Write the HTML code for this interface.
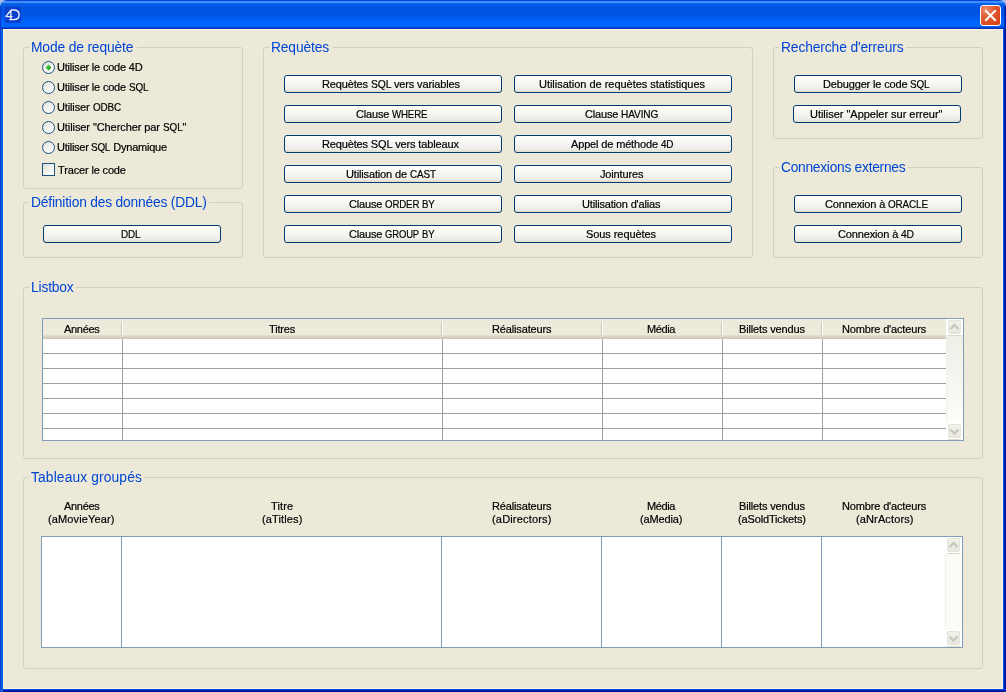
<!DOCTYPE html><html><head><meta charset="utf-8"><style>
*{margin:0;padding:0;box-sizing:border-box}
html,body{width:1006px;height:692px;overflow:hidden;background:#ECE9D8}
body{position:relative;font-family:"Liberation Sans",sans-serif;font-size:11px;color:#000;letter-spacing:-0.2px}
.a{position:absolute}
#tb{left:0;top:0;width:1006px;height:29px;border-radius:7px 7px 0 0;
background:linear-gradient(to bottom,#0842d6 0px,#0842d6 1px,#3d8ffb 1px,#3d8ffb 3px,#1069f0 3px,#0a5fe8 4px,#0058e4 6px,#0054e2 9px,#0054e2 14px,#0058ea 17px,#005ef5 19px,#0064fd 22px,#0066ff 26px,#0055e6 27px,#0036c8 28px,#0030c0 29px)}
#fl{left:0;top:29px;width:3px;height:663px;background:linear-gradient(to right,#0022c8,#166de8 50%,#0040e0)}
#fr{left:1003px;top:29px;width:3px;height:663px;background:linear-gradient(to right,#0a44ec 0,#0a44ec 1px,#0022b4 1px,#0022b4 2px,#00168a 2px)}
#fb{left:3px;top:689px;width:1003px;height:3px;background:linear-gradient(to bottom,#0a44ec 0,#0a44ec 1px,#0022b4 1px,#0022b4 2px,#00168a 2px)}
#cream{left:3px;top:29px;width:1000px;height:660px;border:1px solid #fcf5da;background:#ECE9D8}
.grp{position:absolute;border:1px solid #D0D0BF;border-radius:3px}
.gt{position:absolute;font-size:13.8px;color:#0046D5;line-height:15px;white-space:nowrap}
.btn{position:absolute;height:18px;border:1px solid #003C74;border-radius:3px;
background:linear-gradient(to bottom,#ffffff 0%,#f8f8f5 35%,#eeede8 80%,#e0dcd0 100%);
text-align:center;line-height:16px;white-space:nowrap;font-size:11px;color:#000}
.rad{position:absolute;width:13px;height:13px;border-radius:50%;border:1px solid #1c5180;
background:linear-gradient(135deg,#dcdcd7 0%,#f2f2f0 45%,#fff 100%)}
.lbl{position:absolute;white-space:nowrap;font-size:11px;line-height:13px;-webkit-text-stroke:0.2px #000}
.hdr{position:absolute;text-align:center;font-size:11px;line-height:13px;white-space:nowrap;-webkit-text-stroke:0.2px #000}
</style></head><body><div id="root" class="a" style="left:0;top:0;width:1006px;height:692px;will-change:transform">
<div class="a" style="left:0;top:0;width:8px;height:8px;background:#a6bde9"></div>
<div class="a" style="left:998px;top:0;width:8px;height:8px;background:#a6bde9"></div>
<div class="a" id="cream"></div>
<div class="a" id="tb"></div>
<div class="a" id="fl"></div><div class="a" id="fr"></div><div class="a" id="fb"></div>
<div class="a" style="left:0;top:6px;width:1px;height:23px;background:#0a3ad0"></div>
<div class="a" style="left:1004px;top:6px;width:2px;height:23px;background:linear-gradient(to right,#0038d8,#001a98)"></div>
<div class="a" style="left:5px;top:7px;width:16px;height:16px;background:#0a3fcc"></div>
<svg class="a" style="left:5px;top:7px" width="16" height="16"><path d="M0.8 9.6 L5.8 3.2 M0.6 9.6 H7.5 M5.8 3.2 V12.6 M4.3 12.6 H8.8 C12.3 12.6 14.2 10.4 14.2 7.8 C14.2 5.2 12.3 3 8.8 3 H5.8" fill="none" stroke="#e9eefb" stroke-width="1.4"/></svg>
<div class="a" style="left:980px;top:5px;width:21px;height:21px;border:1px solid #fff;border-radius:3px;background:radial-gradient(circle at 25% 20%,#f08c6c 0%,#e05a32 40%,#d8461c 80%,#c23a10 100%)"></div>
<svg class="a" style="left:980px;top:5px" width="21" height="21"><path d="M6 6 L15 15 M15 6 L6 15" stroke="#fff" stroke-width="2" stroke-linecap="square"/></svg>
<div class="grp" style="left:23px;top:47px;width:220px;height:142px"></div>
<div class="a" style="left:29px;top:45px;width:108px;height:5px;background:#ECE9D8"></div>
<div class="gt" style="left:31px;top:40px;letter-spacing:-0.14px">Mode de requète</div>
<div class="grp" style="left:23px;top:202px;width:220px;height:56px"></div>
<div class="a" style="left:29px;top:200px;width:180px;height:5px;background:#ECE9D8"></div>
<div class="gt" style="left:31px;top:195px;letter-spacing:-0.19px">Définition des données (DDL)</div>
<div class="grp" style="left:263px;top:47px;width:490px;height:211px"></div>
<div class="a" style="left:269px;top:45px;width:64px;height:5px;background:#ECE9D8"></div>
<div class="gt" style="left:271px;top:40px;letter-spacing:-0.14px">Requètes</div>
<div class="grp" style="left:773px;top:47px;width:210px;height:92px"></div>
<div class="a" style="left:779px;top:45px;width:127px;height:5px;background:#ECE9D8"></div>
<div class="gt" style="left:781px;top:40px;letter-spacing:-0.11px">Recherche d'erreurs</div>
<div class="grp" style="left:773px;top:167px;width:210px;height:91px"></div>
<div class="a" style="left:779px;top:165px;width:129px;height:5px;background:#ECE9D8"></div>
<div class="gt" style="left:781px;top:160px;letter-spacing:-0.28px">Connexions externes</div>
<div class="grp" style="left:23px;top:287px;width:960px;height:172px"></div>
<div class="a" style="left:29px;top:285px;width:47px;height:5px;background:#ECE9D8"></div>
<div class="gt" style="left:31px;top:280px;letter-spacing:-0.17px">Listbox</div>
<div class="grp" style="left:23px;top:477px;width:960px;height:192px"></div>
<div class="a" style="left:29px;top:475px;width:115px;height:5px;background:#ECE9D8"></div>
<div class="gt" style="left:31px;top:470px;letter-spacing:0.13px">Tableaux groupés</div>
<div class="rad" style="left:42px;top:61px"></div>
<svg class="a" style="left:42px;top:61px" width="13" height="13"><defs><linearGradient id="gd" x1="0" y1="0" x2="1" y2="1"><stop offset="0" stop-color="#6ee06e"/><stop offset="0.5" stop-color="#2eb52e"/><stop offset="1" stop-color="#0f8f0f"/></linearGradient></defs><polygon points="6.5,3.6 9.4,6.5 6.5,9.4 3.6,6.5" fill="url(#gd)"/></svg>
<div class="lbl" style="left:57px;top:61px;letter-spacing:-0.2px">Utiliser le code 4D</div>
<div class="rad" style="left:42px;top:81px"></div>
<div class="lbl" style="left:57px;top:81px;letter-spacing:-0.2px">Utiliser le code <span style="display:inline-block;transform:scaleX(0.9);transform-origin:0 0;margin-right:-2.14px">SQL</span></div>
<div class="rad" style="left:42px;top:101px"></div>
<div class="lbl" style="left:57px;top:101px;letter-spacing:-0.13px">Utiliser <span style="display:inline-block;transform:scaleX(0.9);transform-origin:0 0;margin-right:-3.10px">ODBC</span></div>
<div class="rad" style="left:42px;top:121px"></div>
<div class="lbl" style="left:57px;top:121px;letter-spacing:-0.085px">Utiliser "Chercher par <span style="display:inline-block;transform:scaleX(0.9);transform-origin:0 0;margin-right:-2.14px">SQL</span>"</div>
<div class="rad" style="left:42px;top:141px"></div>
<div class="lbl" style="left:57px;top:141px;letter-spacing:-0.25px">Utiliser <span style="display:inline-block;transform:scaleX(0.9);transform-origin:0 0;margin-right:-2.14px">SQL</span> Dynamique</div>
<div class="a" style="left:42px;top:163px;width:13px;height:13px;border:1px solid #1c5180;background:linear-gradient(135deg,#dcdcd7 0%,#f4f4f2 60%,#fff 100%)"></div>
<div class="lbl" style="left:58px;top:164px;letter-spacing:-0.15px">Tracer le code</div>
<div class="btn" style="left:43px;top:225px;width:178px"></div>
<div class="lbl" style="left:121px;top:228px;letter-spacing:-0.15px"><span style="display:inline-block;transform:scaleX(0.9);transform-origin:0 0;margin-right:-2.16px">DDL</span></div>
<div class="btn" style="left:284px;top:75px;width:218px"></div>
<div class="lbl" style="left:322px;top:78px;letter-spacing:-0.15px">Requètes <span style="display:inline-block;transform:scaleX(0.94);transform-origin:0 0;margin-right:-1.29px">SQL</span> vers variables</div>
<div class="btn" style="left:514px;top:75px;width:218px"></div>
<div class="lbl" style="left:539px;top:78px;letter-spacing:-0.025px">Utilisation de requètes statistiques</div>
<div class="btn" style="left:284px;top:105px;width:218px"></div>
<div class="lbl" style="left:356px;top:108px;letter-spacing:-0.15px">Clause <span style="display:inline-block;transform:scaleX(0.88);transform-origin:0 0;margin-right:-4.82px">WHERE</span></div>
<div class="btn" style="left:514px;top:105px;width:218px"></div>
<div class="lbl" style="left:585px;top:108px;letter-spacing:-0.15px">Clause <span style="display:inline-block;transform:scaleX(0.92);transform-origin:0 0;margin-right:-3.24px">HAVING</span></div>
<div class="btn" style="left:284px;top:135px;width:218px"></div>
<div class="lbl" style="left:322px;top:138px;letter-spacing:-0.15px">Requètes <span style="display:inline-block;transform:scaleX(1.0);transform-origin:0 0;margin-right:-0.00px">SQL</span> vers tableaux</div>
<div class="btn" style="left:514px;top:135px;width:218px"></div>
<div class="lbl" style="left:571px;top:138px;letter-spacing:-0.15px">Appel de méthode <span style="display:inline-block;transform:scaleX(0.9);transform-origin:0 0;margin-right:-1.38px">4D</span></div>
<div class="btn" style="left:284px;top:165px;width:218px"></div>
<div class="lbl" style="left:346px;top:168px;letter-spacing:-0.15px">Utilisation de <span style="display:inline-block;transform:scaleX(0.9);transform-origin:0 0;margin-right:-2.87px">CAST</span></div>
<div class="btn" style="left:514px;top:165px;width:218px"></div>
<div class="lbl" style="left:600px;top:168px;letter-spacing:-0.15px">Jointures</div>
<div class="btn" style="left:284px;top:195px;width:218px"></div>
<div class="lbl" style="left:349px;top:198px;letter-spacing:-0.15px">Clause <span style="display:inline-block;transform:scaleX(0.88);transform-origin:0 0;margin-right:-4.68px">ORDER</span> <span style="display:inline-block;transform:scaleX(0.88);transform-origin:0 0;margin-right:-1.72px">BY</span></div>
<div class="btn" style="left:514px;top:195px;width:218px"></div>
<div class="lbl" style="left:582px;top:198px;letter-spacing:-0.175px">Utilisation d'alias</div>
<div class="btn" style="left:284px;top:225px;width:218px"></div>
<div class="lbl" style="left:349px;top:228px;letter-spacing:-0.15px">Clause <span style="display:inline-block;transform:scaleX(0.86);transform-origin:0 0;margin-right:-5.54px">GROUP</span> <span style="display:inline-block;transform:scaleX(0.86);transform-origin:0 0;margin-right:-2.01px">BY</span></div>
<div class="btn" style="left:514px;top:225px;width:218px"></div>
<div class="lbl" style="left:586px;top:228px;letter-spacing:-0.075px">Sous requètes</div>
<div class="btn" style="left:794px;top:75px;width:168px"></div>
<div class="lbl" style="left:823px;top:78px;letter-spacing:-0.15px">Debugger le code <span style="display:inline-block;transform:scaleX(0.9);transform-origin:0 0;margin-right:-2.16px">SQL</span></div>
<div class="btn" style="left:793px;top:105px;width:168px"></div>
<div class="lbl" style="left:810px;top:108px;letter-spacing:-0.025px">Utiliser "Appeler sur erreur"</div>
<div class="btn" style="left:794px;top:195px;width:168px"></div>
<div class="lbl" style="left:825px;top:198px;letter-spacing:-0.15px">Connexion à <span style="display:inline-block;transform:scaleX(0.9);transform-origin:0 0;margin-right:-4.43px">ORACLE</span></div>
<div class="btn" style="left:794px;top:225px;width:168px"></div>
<div class="lbl" style="left:838px;top:228px;letter-spacing:-0.15px">Connexion à <span style="display:inline-block;transform:scaleX(0.94);transform-origin:0 0;margin-right:-0.83px">4D</span></div>
<div class="a" style="left:42px;top:318px;width:922px;height:123px;border:1px solid #7F9DB9;background:#fff"></div>
<div class="a" style="left:43px;top:319px;width:903px;height:20px;background:linear-gradient(to bottom,#ebeadb 0,#ebeadb 16px,#e2dfcf 16px,#d6d2c2 18px,#cbc7b8 20px)"></div>
<div class="lbl" style="left:64px;top:323px;letter-spacing:-0.3px">Années</div>
<div class="lbl" style="left:269px;top:323px;letter-spacing:-0.15px">Titres</div>
<div class="lbl" style="left:492px;top:323px;letter-spacing:-0.15px">Réalisateurs</div>
<div class="lbl" style="left:647px;top:323px;letter-spacing:-0.375px">Média</div>
<div class="lbl" style="left:739px;top:323px;letter-spacing:-0.15px">Billets vendus</div>
<div class="lbl" style="left:842px;top:323px;letter-spacing:-0.15px">Nombre d'acteurs</div>
<div class="a" style="left:121px;top:322px;width:1px;height:13px;background:#cac8bb"></div>
<div class="a" style="left:122px;top:322px;width:1px;height:13px;background:#fff"></div>
<div class="a" style="left:122px;top:339px;width:1px;height:101px;background:#a0a0a0"></div>
<div class="a" style="left:441px;top:322px;width:1px;height:13px;background:#cac8bb"></div>
<div class="a" style="left:442px;top:322px;width:1px;height:13px;background:#fff"></div>
<div class="a" style="left:442px;top:339px;width:1px;height:101px;background:#a0a0a0"></div>
<div class="a" style="left:601px;top:322px;width:1px;height:13px;background:#cac8bb"></div>
<div class="a" style="left:602px;top:322px;width:1px;height:13px;background:#fff"></div>
<div class="a" style="left:602px;top:339px;width:1px;height:101px;background:#a0a0a0"></div>
<div class="a" style="left:721px;top:322px;width:1px;height:13px;background:#cac8bb"></div>
<div class="a" style="left:722px;top:322px;width:1px;height:13px;background:#fff"></div>
<div class="a" style="left:722px;top:339px;width:1px;height:101px;background:#a0a0a0"></div>
<div class="a" style="left:821px;top:322px;width:1px;height:13px;background:#cac8bb"></div>
<div class="a" style="left:822px;top:322px;width:1px;height:13px;background:#fff"></div>
<div class="a" style="left:822px;top:339px;width:1px;height:101px;background:#a0a0a0"></div>
<div class="a" style="left:43px;top:353px;width:903px;height:1px;background:#a0a0a0"></div>
<div class="a" style="left:43px;top:368px;width:903px;height:1px;background:#a0a0a0"></div>
<div class="a" style="left:43px;top:383px;width:903px;height:1px;background:#a0a0a0"></div>
<div class="a" style="left:43px;top:398px;width:903px;height:1px;background:#a0a0a0"></div>
<div class="a" style="left:43px;top:413px;width:903px;height:1px;background:#a0a0a0"></div>
<div class="a" style="left:43px;top:428px;width:903px;height:1px;background:#a0a0a0"></div>
<div class="a" style="left:946px;top:319px;width:17px;height:121px;background:linear-gradient(to bottom,#efeee7 15%,#fdfdf9 85%);border-left:1px solid #f1f0e8"></div>
<div class="a" style="left:946px;top:319px;width:17px;height:16px;background:#fff"></div>
<div class="a" style="left:948px;top:320px;width:13px;height:14px;border-radius:2px;border:1px solid #e4e3d8;background:linear-gradient(to bottom,#f2f1ea,#e9e8e0)"></div>
<div class="a" style="left:948px;top:335px;width:13px;height:1px;background:#d8d9c6"></div>
<svg class="a" style="left:946px;top:319px" width="17" height="17"><path d="M4.5 10 L8.5 6 L12.5 10" fill="none" stroke="#c8c8bb" stroke-width="2.4"/></svg>
<div class="a" style="left:946px;top:423px;width:17px;height:17px;background:#fff"></div>
<div class="a" style="left:948px;top:424px;width:13px;height:14px;border-radius:2px;border:1px solid #e4e3d8;background:linear-gradient(to bottom,#f2f1ea,#e9e8e0)"></div>
<div class="a" style="left:948px;top:439px;width:13px;height:1px;background:#e0dcc4"></div>
<svg class="a" style="left:946px;top:423px" width="17" height="17"><path d="M4.5 6.5 L8.5 10.5 L12.5 6.5" fill="none" stroke="#c8c8bb" stroke-width="2.4"/></svg>
<div class="a" style="left:41px;top:536px;width:922px;height:112px;border:1px solid #7F9DB9;background:#fff"></div>
<div class="a" style="left:121px;top:537px;width:1px;height:110px;background:#7F9DB9"></div>
<div class="a" style="left:441px;top:537px;width:1px;height:110px;background:#7F9DB9"></div>
<div class="a" style="left:601px;top:537px;width:1px;height:110px;background:#7F9DB9"></div>
<div class="a" style="left:721px;top:537px;width:1px;height:110px;background:#7F9DB9"></div>
<div class="a" style="left:821px;top:537px;width:1px;height:110px;background:#7F9DB9"></div>
<div class="lbl" style="left:64px;top:500px;letter-spacing:-0.3px">Années</div>
<div class="lbl" style="left:48px;top:513px;letter-spacing:0.125px">(aMovieYear)</div>
<div class="lbl" style="left:271px;top:500px;letter-spacing:0.125px">Titre</div>
<div class="lbl" style="left:262px;top:513px;letter-spacing:0.125px">(aTitles)</div>
<div class="lbl" style="left:492px;top:500px;letter-spacing:-0.15px">Réalisateurs</div>
<div class="lbl" style="left:492px;top:513px;letter-spacing:0.175px">(aDirectors)</div>
<div class="lbl" style="left:647px;top:500px;letter-spacing:-0.375px">Média</div>
<div class="lbl" style="left:640px;top:513px;letter-spacing:-0.15px">(aMedia)</div>
<div class="lbl" style="left:739px;top:500px;letter-spacing:-0.15px">Billets vendus</div>
<div class="lbl" style="left:738px;top:513px;letter-spacing:-0.15px">(aSoldTickets)</div>
<div class="lbl" style="left:842px;top:500px;letter-spacing:-0.15px">Nombre d'acteurs</div>
<div class="lbl" style="left:856px;top:513px;letter-spacing:0.125px">(aNrActors)</div>
<div class="a" style="left:945px;top:537px;width:17px;height:110px;background:#fcfcf7;border-left:1px solid #f1f0e8"></div>
<div class="a" style="left:945px;top:537px;width:17px;height:16px;background:#fff"></div>
<div class="a" style="left:947px;top:538px;width:13px;height:14px;border-radius:2px;border:1px solid #e4e3d8;background:linear-gradient(to bottom,#f2f1ea,#e9e8e0)"></div>
<div class="a" style="left:947px;top:553px;width:13px;height:1px;background:#d8d9c6"></div>
<svg class="a" style="left:945px;top:537px" width="17" height="17"><path d="M4.5 10 L8.5 6 L12.5 10" fill="none" stroke="#c8c8bb" stroke-width="2.4"/></svg>
<div class="a" style="left:945px;top:630px;width:17px;height:17px;background:#fff"></div>
<div class="a" style="left:947px;top:631px;width:13px;height:14px;border-radius:2px;border:1px solid #e4e3d8;background:linear-gradient(to bottom,#f2f1ea,#e9e8e0)"></div>
<div class="a" style="left:947px;top:646px;width:13px;height:1px;background:#e0dcc4"></div>
<svg class="a" style="left:945px;top:630px" width="17" height="17"><path d="M4.5 6.5 L8.5 10.5 L12.5 6.5" fill="none" stroke="#c8c8bb" stroke-width="2.4"/></svg>
</div></body></html>
